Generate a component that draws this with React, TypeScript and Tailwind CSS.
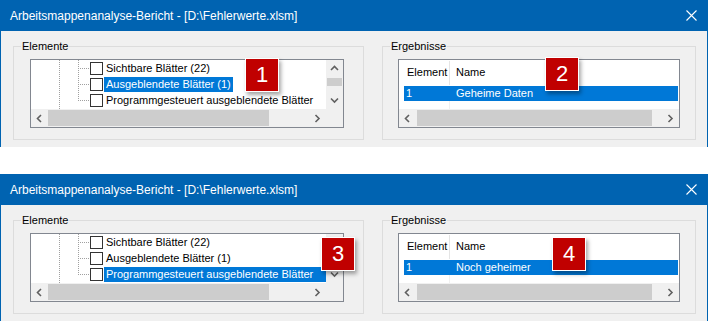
import React from 'react';

type Dir = 'up' | 'down' | 'left' | 'right';

function Chevron({ dir }: { dir: Dir }) {
  const paths: Record<Dir, string> = {
    up: 'M1 5 L4.5 1.5 L8 5',
    down: 'M1 1.5 L4.5 5 L8 1.5',
    left: 'M5 1 L1.5 4.5 L5 8',
    right: 'M1.5 1 L5 4.5 L1.5 8',
  };
  const vertical = dir === 'up' || dir === 'down';
  const w = vertical ? 9 : 7;
  const h = vertical ? 7 : 9;
  return (
    <svg width={w} height={h} viewBox={`0 0 ${w} ${h}`}>
      <path d={paths[dir]} fill="none" stroke="#606060" strokeWidth="1.6" />
    </svg>
  );
}

function HScroll({ thumb }: { thumb: string }) {
  return (
    <div className="flex h-[18px] bg-[#f0f0f0]">
      <div className="w-[17px] flex items-center justify-center">
        <Chevron dir="left" />
      </div>
      <div className={`${thumb} my-[1px] bg-[#cdcdcd]`} />
      <div className="flex-1" />
      <div className="w-[17px] flex items-center justify-center">
        <Chevron dir="right" />
      </div>
    </div>
  );
}

function Group({ label, className, children }: { label: string; className: string; children: React.ReactNode }) {
  return (
    <div className={`relative h-[94px] border border-[#dcdcdc] pt-[12px] ${className}`}>
      <span className="absolute left-[7px] top-[-8px] px-[1px] bg-[#f0f0f0] leading-[14px] text-black">
        {label}
      </span>
      {children}
    </div>
  );
}

const items = ['Sichtbare Blätter (22)', 'Ausgeblendete Blätter (1)', 'Programmgesteuert ausgeblendete Blätter'];

function TreeLines() {
  return (
    <svg className="absolute inset-0" width="295" height="49" shapeRendering="crispEdges">
      <line x1="28.5" y1="0" x2="28.5" y2="49" stroke="#a0a0a0" strokeDasharray="1 1" />
      <line x1="47.5" y1="0" x2="47.5" y2="41" stroke="#a0a0a0" strokeDasharray="1 1" />
      {[8, 24, 40].map((y) => (
        <line key={y} x1="49" y1={y + 0.5} x2="58" y2={y + 0.5} stroke="#a0a0a0" strokeDasharray="1 1" />
      ))}
    </svg>
  );
}

function Tree({ selected }: { selected: number }) {
  return (
    <div className="w-[314px] h-[69px] border border-[#828790] bg-white grid grid-cols-[295px_17px] grid-rows-[49px_18px]">
      <div className="relative overflow-hidden">
        <TreeLines />
        {items.map((text, i) => (
          <div key={text} className="relative flex items-center h-[16px] pl-[59px]">
            <div className="w-[13px] h-[13px] border border-[#333333] bg-white shrink-0" />
            <span
              className={`ml-[1px] pl-[2px] h-[15px] leading-[15px] whitespace-nowrap ${
                i === selected ? 'bg-[#0078d7] text-white' : 'text-black'
              } ${i === selected && i === 2 ? 'flex-1' : 'pr-[2px]'}`}
            >
              {text}
            </span>
          </div>
        ))}
      </div>
      <div className="flex flex-col bg-[#f0f0f0]">
        <div className="h-[17px] flex items-center justify-center">
          <Chevron dir="up" />
        </div>
        <div className="flex-1">
          <div className="mt-[1px] ml-[1px] w-[15px] h-[8px] bg-[#cdcdcd]" />
        </div>
        <div className="h-[17px] flex items-center justify-center">
          <Chevron dir="down" />
        </div>
      </div>
      <HScroll thumb="w-[221px]" />
      <div className="bg-[#f0f0f0]" />
    </div>
  );
}

function Results({ name }: { name: string }) {
  return (
    <div className="w-[282px] h-[69px] border border-[#828790] bg-white flex flex-col">
      <div className="h-[49px] relative">
        <div className="flex h-[25px] items-center text-black">
          <div className="w-[50px] pl-[8px]">Element</div>
          <div className="w-[1px] h-[24px] bg-[#e5e5e5]" />
          <div className="pl-[6px]">Name</div>
        </div>
        <div className="flex mt-[1px] ml-[5px] mr-[1px] h-[15px] leading-[15px] bg-[#0078d7] text-white">
          <div className="w-[46px] pl-[2px]">1</div>
          <div className="pl-[6px]">{name}</div>
        </div>
        <div className="ml-[50px] w-[1px] h-[8px] bg-[#f0f0f0]" />
      </div>
      <HScroll thumb="w-[235px] ml-[1px]" />
    </div>
  );
}

function Badge({ n, pos }: { n: number; pos: string }) {
  return (
    <div
      className={`absolute ${pos} w-[34px] h-[34px] bg-[#c00000] border border-white shadow-[2px_3px_4px_rgba(0,0,0,0.35)] flex items-center justify-center text-white text-[22px] leading-none`}
    >
      {n}
    </div>
  );
}

function Dialog({
  selected,
  name,
  badges,
}: {
  selected: number;
  name: string;
  badges: { n: number; pos: string }[];
}) {
  return (
    <div className="relative">
      <div className="h-[31px] bg-[#0063b1] flex items-center justify-between pl-[10px] pr-[11px] text-white text-[12px]">
        <span>Arbeitsmappenanalyse-Bericht - [D:\Fehlerwerte.xlsm]</span>
        <svg width="11" height="11" viewBox="0 0 11 11">
          <path d="M0.5 0.5 L10.5 10.5 M10.5 0.5 L0.5 10.5" stroke="white" strokeWidth="1.1" />
        </svg>
      </div>
      <div className="h-[116px] bg-[#f0f0f0] border-x border-[#0063b1] pt-[15px] pl-[12px] flex items-start gap-[18px]">
        <Group label="Elemente" className="w-[351px] pl-[16px]">
          <Tree selected={selected} />
        </Group>
        <Group label="Ergebnisse" className="w-[314px] pl-[15px]">
          <Results name={name} />
        </Group>
      </div>
      {badges.map((b) => (
        <Badge key={b.n} n={b.n} pos={b.pos} />
      ))}
    </div>
  );
}

export default function App() {
  return (
    <div className="w-[708px] h-[321px] overflow-hidden bg-white text-[11px] font-['Liberation_Sans',Arial,sans-serif]">
      <Dialog
        selected={1}
        name="Geheime Daten"
        badges={[
          { n: 1, pos: 'left-[245px] top-[58px]' },
          { n: 2, pos: 'left-[545px] top-[57px]' },
        ]}
      />
      <div className="h-[27px]" />
      <Dialog
        selected={2}
        name="Noch geheimer"
        badges={[
          { n: 3, pos: 'left-[321px] top-[63px]' },
          { n: 4, pos: 'left-[552px] top-[63px]' },
        ]}
      />
    </div>
  );
}
